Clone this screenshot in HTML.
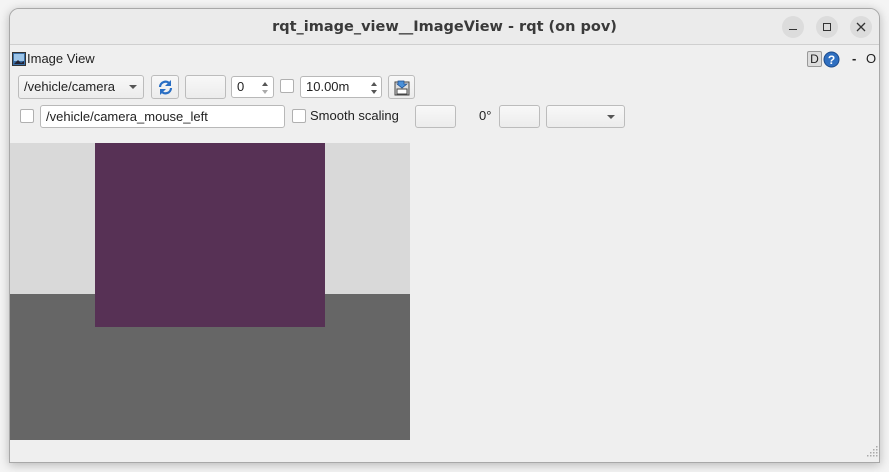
<!DOCTYPE html>
<html><head><meta charset="utf-8"><style>
*{box-sizing:border-box;margin:0;padding:0}
body{width:889px;height:472px;background:#f4f4f4;font-family:"Liberation Sans","DejaVu Sans",sans-serif;font-size:13px;color:#222;position:relative;overflow:hidden}
.win{position:absolute;left:9px;top:8px;width:871px;height:455px;background:#efefef;border:1px solid #a8a8a8;border-radius:10px 10px 0 0;box-shadow:0 2px 10px rgba(0,0,0,.25);overflow:hidden}
.title{position:absolute;left:0;top:0;width:100%;height:36px;background:#ebebeb;border-bottom:1px solid #cfcfcf;text-align:center;line-height:36px;font-weight:bold;font-size:14.5px;color:#3a3a3a;font-family:"DejaVu Sans","Liberation Sans",sans-serif}
.wb{position:absolute;top:7px;width:22px;height:22px;border-radius:50%;background:#dcdcdc}
.a{position:absolute}
.btn{position:absolute;background:linear-gradient(#f8f8f8,#ececec);border:1px solid #bcbcbc;border-radius:3px}
.field{position:absolute;background:#fff;border:1px solid #b8b8b8;border-radius:3px;padding-left:5px;line-height:20px}
.cb{position:absolute;width:14px;height:14px;background:#fff;border:1px solid #b0b0b0;border-radius:2px}
.arr{position:absolute;width:0;height:0;border-left:4px solid transparent;border-right:4px solid transparent;border-top:4px solid #555}
</style></head><body>
<div class="win">
<div class="title">rqt_image_view__ImageView - rqt (on pov)</div>
<div class="wb" style="left:772px"><div class="a" style="left:7px;top:13px;width:8px;height:1px;background:#333"></div></div>
<div class="wb" style="left:806px"><div class="a" style="left:7px;top:7px;width:8px;height:8px;border:1px solid #333"></div></div>
<div class="wb" style="left:840px"><svg class="a" style="left:6px;top:6px" width="10" height="10"><path d="M1 1L9 9M9 1L1 9" stroke="#333" stroke-width="1.3"/></svg></div>

<svg class="a" style="left:2px;top:43px" width="14" height="14"><rect x=".5" y=".5" width="13" height="13" fill="#3a6ea5" stroke="#333"/><rect x="2" y="2" width="10" height="7" fill="#9cc4e8"/><path d="M2 12L6 8L9 11L12 9V12Z" fill="#223"/></svg>
<div class="a" style="left:17px;top:42px;font-size:13px">Image View</div>
<div class="a" style="left:797px;top:42px;width:15px;height:16px;border:1px solid #999;background:#ddd;font-size:12px;text-align:center;line-height:14px;border-radius:2px">D</div>
<svg class="a" style="left:813px;top:42px" width="17" height="17"><circle cx="8.5" cy="8.5" r="7.5" fill="#2f6fc0" stroke="#1c4a8a"/><text x="8.5" y="13" text-anchor="middle" font-size="12" font-weight="bold" fill="#fff" font-family="Liberation Sans">?</text></svg>
<div class="a" style="left:842px;top:42px;font-weight:bold">-</div>
<div class="a" style="left:856px;top:42px">O</div>

<div class="btn" style="left:8px;top:66px;width:126px;height:24px;padding-left:5px;line-height:22px">/vehicle/camera</div>
<div class="arr" style="left:119px;top:76px"></div>
<div class="btn" style="left:141px;top:66px;width:28px;height:24px"><svg class="a" style="left:5px;top:3px" width="17" height="17"><path d="M3 8A5.5 5.5 0 0 1 13 5" fill="none" stroke="#2a6fc4" stroke-width="2.2"/><path d="M14 1V7H8Z" fill="#2a6fc4"/><path d="M14 9A5.5 5.5 0 0 1 4 12" fill="none" stroke="#2a6fc4" stroke-width="2.2"/><path d="M3 16V10H9Z" fill="#2a6fc4"/></svg></div>
<div class="btn" style="left:175px;top:66px;width:41px;height:24px"></div>
<div class="field" style="left:221px;top:67px;width:43px;height:22px">0</div>
<div class="a" style="left:252px;top:73px;border-left:3px solid transparent;border-right:3px solid transparent;border-bottom:4px solid #555"></div>
<div class="a" style="left:252px;top:81px;border-left:3px solid transparent;border-right:3px solid transparent;border-top:4px solid #aaa"></div>
<div class="cb" style="left:270px;top:70px"></div>
<div class="field" style="left:290px;top:67px;width:82px;height:22px">10.00m</div>
<div class="a" style="left:361px;top:73px;border-left:3px solid transparent;border-right:3px solid transparent;border-bottom:4px solid #555"></div>
<div class="a" style="left:361px;top:81px;border-left:3px solid transparent;border-right:3px solid transparent;border-top:4px solid #555"></div>
<div class="btn" style="left:378px;top:66px;width:27px;height:24px"><svg class="a" style="left:5px;top:3px" width="16" height="17"><rect x="1" y="3" width="14" height="13" fill="#ddd" stroke="#444"/><rect x="3" y="10" width="10" height="5" fill="#fff" stroke="#444"/><path d="M4 2H10V5H13L8 9L3 5H4Z" fill="#4a90d9" stroke="#1c4a8a" stroke-width=".7"/></svg></div>

<div class="cb" style="left:10px;top:100px"></div>
<div class="field" style="left:30px;top:96px;width:245px;height:23px;line-height:21px">/vehicle/camera_mouse_left</div>
<div class="cb" style="left:282px;top:100px"></div>
<div class="a" style="left:300px;top:99px">Smooth scaling</div>
<div class="btn" style="left:405px;top:96px;width:41px;height:23px"></div>
<div class="a" style="left:469px;top:99px">0°</div>
<div class="btn" style="left:489px;top:96px;width:41px;height:23px"></div>
<div class="btn" style="left:536px;top:96px;width:79px;height:23px"></div>
<div class="arr" style="left:597px;top:106px"></div>

<div class="a" style="left:0px;top:134px;width:400px;height:151px;background:#d9d9d9"></div>
<div class="a" style="left:0px;top:285px;width:400px;height:146px;background:#666666"></div>
<div class="a" style="left:85px;top:134px;width:230px;height:184px;background:#573155"></div>
<svg class="a" style="left:856px;top:437px" width="12" height="12" fill="#aaa"><rect x="10" y="0" width="1.5" height="1.5"/><rect x="7" y="3" width="1.5" height="1.5"/><rect x="10" y="3" width="1.5" height="1.5"/><rect x="4" y="6" width="1.5" height="1.5"/><rect x="7" y="6" width="1.5" height="1.5"/><rect x="10" y="6" width="1.5" height="1.5"/><rect x="1" y="9" width="1.5" height="1.5"/><rect x="4" y="9" width="1.5" height="1.5"/><rect x="7" y="9" width="1.5" height="1.5"/><rect x="10" y="9" width="1.5" height="1.5"/></svg>
</div>
</body></html>
